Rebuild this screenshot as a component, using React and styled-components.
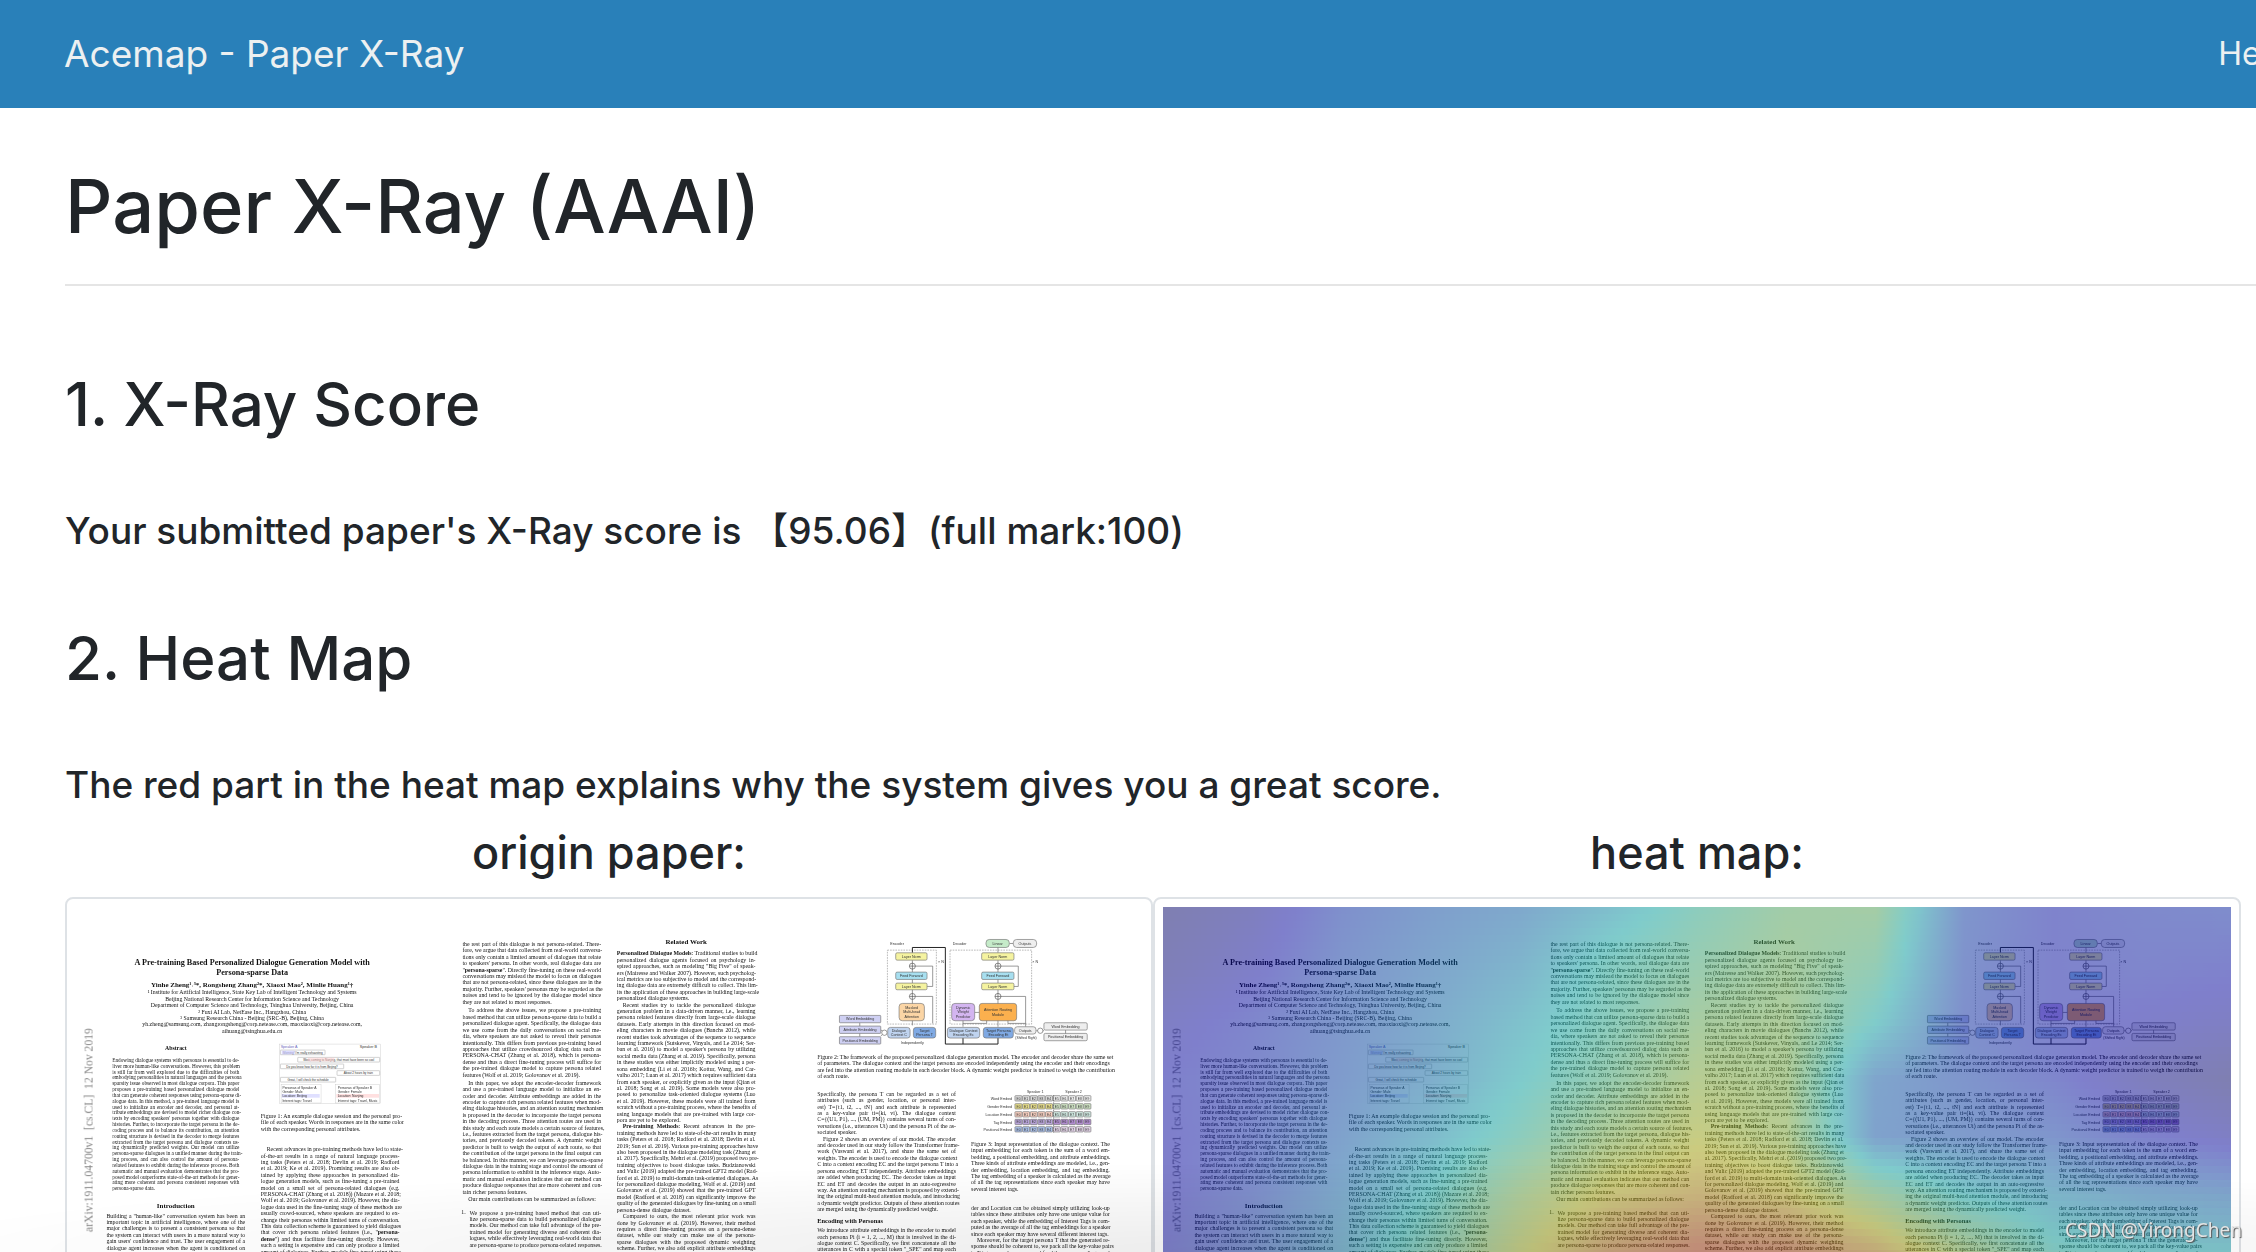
import styled, { createGlobalStyle } from 'styled-components'

// styles
const GlobalStyle = createGlobalStyle`
  *{
    box-sizing: border-box;
  }

  body{
    margin: 0;
    background-color: white;
    color: #212529;
    font-family: Inter, 'Noto Sans CJK SC', sans-serif;
    overflow: hidden;
  }
`

const Page = styled.div`
  width: calc(100% + 96px);
  height: 100vh;
  overflow: hidden;
`

const Navbar = styled.nav`
  display: flex;
  align-items: center;
  justify-content: space-between;
  height: 108px;
  padding: 0 64px;
  background-color: #2980b9;
`

const Brand = styled.a`
  color: #ecf0f1;
  font-size: 37px;
  line-height: 60px;
  text-decoration: none;
`

const NavLink = styled.a`
  color: #ecf0f1;
  font-size: 32px;
  line-height: 48px;
  text-decoration: none;
`

const Container = styled.main`
  padding: 50px 0 0 65px;
`

const Title = styled.h1`
  margin: 0;
  font-size: 74px;
  font-weight: 500;
  line-height: 96px;
`

const Divider = styled.hr`
  margin: 30px 0 80px;
  border: none;
  border-top: 2px solid #e5e5e5;
`

const Heading = styled.h2`
  margin: 0;
  font-size: 60px;
  font-weight: 500;
  line-height: 76px;
`

const Text = styled.p`
  margin: ${props => props.$last ? '65px 0 16px' : '65px 0'};
  font-size: 37px;
  font-weight: 500;
  line-height: 48px;
`

const Compare = styled.div`
  display: grid;
  grid-template-columns: 1fr 1fr;
  margin-right: 111px;
`

const Figure = styled.figure`
  display: flex;
  flex-direction: column;
  margin: 0;
`

const Caption = styled.figcaption`
  margin-bottom: 16px;
  font-size: 45px;
  font-weight: 500;
  line-height: 56px;
  text-align: center;
`

const Thumbnail = styled.div`
  padding: 8px;
  border: 2px solid #dee2e6;
  border-radius: 8px;

  svg{
    display: block;
    width: 100%;
  }
`

const Scan = styled.g`
  filter: blur(1px);
`

const Lines = styled.div`
  color: #111;
  font-family: 'Liberation Serif', serif;
  font-size: ${props => props.$size}px;
  line-height: ${props => props.$leading}px;
  white-space: nowrap;
`

const Line = styled.div`
  padding-left: ${props => props.$indent ? 10 : 0}px;
  text-align-last: ${props => props.$end ? 'left' : 'justify'};
`

const Shade = styled.div`
  position: fixed;
  right: 0;
  bottom: 0;
  left: 0;
  height: 90px;
  background: radial-gradient(ellipse 66% 100% at 60% 100%, rgba(0, 0, 0, 0.08), transparent);
  pointer-events: none;
`

const Watermark = styled.span`
  position: fixed;
  right: 14px;
  bottom: 8px;
  color: #e4e4e4;
  font-family: 'Noto Sans', sans-serif;
  font-size: 19px;
  line-height: 28px;
  text-shadow: 1px 1px 1px #555;
`

// paper text: ">" indents a line, "|" ends a paragraph, "*" wraps bold words
const abstractText = `Endowing dialogue systems with personas is essential to de-
liver more human-like conversations. However, this problem
is still far from well explored due to the difficulties of both
embodying personalities in natural languages and the persona
sparsity issue observed in most dialogue corpora. This paper
proposes a pre-training based personalized dialogue model
that can generate coherent responses using persona-sparse di-
alogue data. In this method, a pre-trained language model is
used to initialize an encoder and decoder, and personal at-
tribute embeddings are devised to model richer dialogue con-
texts by encoding speakers' personas together with dialogue
histories. Further, to incorporate the target persona in the de-
coding process and to balance its contribution, an attention
routing structure is devised in the decoder to merge features
extracted from the target persona and dialogue contexts us-
ing dynamically predicted weights. Our model can utilize
persona-sparse dialogues in a unified manner during the train-
ing process, and can also control the amount of persona-
related features to exhibit during the inference process. Both
automatic and manual evaluation demonstrates that the pro-
posed model outperforms state-of-the-art methods for gener-
ating more coherent and persona consistent responses with
persona-sparse data.|`

const introText = `Building a "human-like" conversation system has been an
important topic in artificial intelligence, where one of the
major challenges is to present a consistent persona so that
the system can interact with users in a more natural way to
gain users' confidence and trust. The user engagement of a
dialogue agent increases when the agent is conditioned on
various persona settings, including age, gender, language,
speaking accent, location, or even a proper sense of humor.`

const captionOne = `Figure 1: An example dialogue session and the personal pro-
file of each speaker. Words in responses are in the same color
with the corresponding personal attributes.|`

const recentText = `>Recent advances in pre-training methods have led to state-
of-the-art results in a range of natural language process-
ing tasks (Peters et al. 2018; Devlin et al. 2019; Radford
et al. 2019; Ke et al. 2019). Promising results are also ob-
tained by applying these approaches in personalized dia-
logue generation models, such as fine-tuning a pre-trained
model on a small set of persona-related dialogues (e.g.
PERSONA-CHAT (Zhang et al. 2018)) (Mazare et al. 2018;
Wolf et al. 2019; Golovanov et al. 2019). However, the dia-
logue data used in the fine-tuning stage of these methods are
usually crowd-sourced, where speakers are required to ex-
change their personas within limited turns of conversation.
This data collection scheme is guaranteed to yield dialogues
that cover rich persona related features (i.e., "*persona-*
*dense*") and thus facilitate fine-tuning directly. However,
such a setting is expensive and can only produce a limited
amount of dialogues. Further, models fine-tuned using these
data tend to over-fit to the routine that persona-related features`

const restText = `the rest part of this dialogue is not persona-related. There-
fore, we argue that data collected from real-world conversa-
tions only contain a limited amount of dialogues that relate
to speakers' persona. In other words, real dialogue data are
"*persona-sparse*". Directly fine-tuning on these real-world
conversations may mislead the model to focus on dialogues
that are not persona-related, since these dialogues are in the
majority. Further, speakers' personas may be regarded as the
noises and tend to be ignored by the dialogue model since
they are not related to most responses.|`

const addressText = `>To address the above issues, we propose a pre-training
based method that can utilize persona-sparse data to build a
personalized dialogue agent. Specifically, the dialogue data
we use come from the daily conversations on social me-
dia, where speakers are not asked to reveal their personas
intentionally. This differs from previous pre-training based
approaches that utilize crowdsourced dialog data such as
PERSONA-CHAT (Zhang et al. 2018), which is persona-
dense and thus a direct fine-tuning process will suffice for
the pre-trained dialogue model to capture persona related
features (Wolf et al. 2019; Golovanov et al. 2019).|`

const adoptText = `>In this paper, we adopt the encoder-decoder framework
and use a pre-trained language model to initialize an en-
coder and decoder. Attribute embeddings are added in the
encoder to capture rich persona related features when mod-
eling dialogue histories, and an attention routing mechanism
is proposed in the decoder to incorporate the target persona
in the decoding process. Three attention routes are used in
this study and each route models a certain source of features,
i.e., features extracted from the target persona, dialogue his-
tories, and previously decoded tokens. A dynamic weight
predictor is built to weigh the output of each route, so that
the contribution of the target persona in the final output can
be balanced. In this manner, we can leverage persona-sparse
dialogue data in the training stage and control the amount of
persona information to exhibit in the inference stage. Auto-
matic and manual evaluation indicates that our method can
produce dialogue responses that are more coherent and con-
tain richer persona features.|`

const itemText = `We propose a pre-training based method that can uti-
lize persona-sparse data to build personalized dialogue
models. Our method can take full advantage of the pre-
trained model for generating diverse and coherent dia-
logues, while effectively leveraging real-world data that
are persona-sparse to produce persona-related responses.|`

const relatedText = `*Personalized Dialogue Models*: Traditional studies to build
personalized dialogue agents focused on psychology in-
spired approaches, such as modeling "Big Five" of speak-
ers (Mairesse and Walker 2007). However, such psycholog-
ical metrics are too subjective to model and the correspond-
ing dialogue data are extremely difficult to collect. This lim-
its the application of these approaches in building large-scale
personalized dialogue systems.|
>Recent studies try to tackle the personalized dialogue
generation problem in a data-driven manner, i.e., learning
persona related features directly from large-scale dialogue
datasets. Early attempts in this direction focused on mod-
eling characters in movie dialogues (Banchs 2012), while
recent studies took advantages of the sequence to sequence
learning framework (Sutskever, Vinyals, and Le 2014; Ser-
ban et al. 2016) to model a speaker's persona by utilizing
social media data (Zhang et al. 2019). Specifically, persona
in these studies was either implicitly modeled using a per-
sona embedding (Li et al. 2016b; Kottur, Wang, and Car-
valho 2017; Luan et al. 2017) which requires sufficient data
from each speaker, or explicitly given as the input (Qian et
al. 2018; Song et al. 2019). Some models were also pro-
posed to personalize task-oriented dialogue systems (Luo
et al. 2019). However, these models were all trained from
scratch without a pre-training process, where the benefits of
using language models that are pre-trained with large cor-
pora are yet to be explored.|
>*Pre-training Methods*: Recent advances in the pre-
training methods have led to state-of-the-art results in many
tasks (Peters et al. 2018; Radford et al. 2018; Devlin et al.
2019; Sun et al. 2019). Various pre-training approaches have
also been proposed in the dialogue modeling task (Zhang et
al. 2017). Specifically, Mehri et al. (2019) proposed two pre-
training objectives to boost dialogue tasks. Budzianowski
and Vulic (2019) adapted the pre-trained GPT2 model (Rad-
ford et al. 2019) to multi-domain task-oriented dialogues. As
for personalized dialogue modeling, Wolf et al. (2019) and
Golovanov et al. (2019) showed that the pre-trained GPT
model (Radford et al. 2018) can significantly improve the
quality of the generated dialogues by fine-tuning on a small
persona-dense dialogue dataset.|
>Compared to ours, the most relevant prior work was
done by Golovanov et al. (2019). However, their method
requires a direct fine-tuning process on a persona-dense
dataset, while our study can make use of the persona-
sparse dialogues with the proposed dynamic weighting
scheme. Further, we also add explicit attribute embeddings
to model structured personas when encoding dialogue con-
texts, which can bring more coherent responses in general.`

const captionTwo = `Figure 2: The framework of the proposed personalized dialogue generation model. The encoder and decoder share the same set
of parameters. The dialogue context and the target persona are encoded independently using the encoder and their encodings
are fed into the attention routing module in each decoder block. A dynamic weight predictor is trained to weigh the contribution
of each route.|`

const personaText = `Specifically, the persona T can be regarded as a set of
attributes (such as gender, location, or personal inter-
est) T={t1, t2, ..., tN} and each attribute is represented
as a key-value pair ti=(ki, vi). The dialogue context
C={(U1, P1), ..., (UM, PM)} contains several turns of con-
versations (i.e., utterances Ui) and the persona Pi of the as-
sociated speaker.|
>Figure 2 shows an overview of our model. The encoder
and decoder used in our study follow the Transformer frame-
work (Vaswani et al. 2017), and share the same set of
weights. The encoder is used to encode the dialogue context
C into a context encoding EC and the target persona T into a
persona encoding ET independently. Attribute embeddings
are added when producing EC. The decoder takes as input
EC and ET and decodes the output in an auto-regressive
way. An attention routing mechanism is proposed by extend-
ing the original multi-head attention module, and introducing
a dynamic weight predictor. Outputs of these attention routes
are merged using the dynamically predicted weight.|`

const encodingText = `We introduce attribute embeddings in the encoder to model
each persona Pi (i = 1, 2, ..., M) that is involved in the di-
alogue context C. Specifically, we first concatenate all the
utterances in C with a special token "_SPE" and map each
attribute of the speakers to an embedding representation.`

const captionThree = `Figure 3: Input representation of the dialogue context. The
input embedding for each token is the sum of a word em-
bedding, a positional embedding, and attribute embeddings.
Three kinds of attribute embeddings are modeled, i.e., gen-
der embedding, location embedding, and tag embedding.
The tag embedding of a speaker is calculated as the average
of all the tag representations since each speaker may have
several interest tags.|`

const lookupText = `der and Location can be obtained simply utilizing look-up
tables since these attributes only have one unique value for
each speaker, while the embedding of Interest Tags is com-
puted as the average of all the tag embeddings for a speaker
since each speaker may have several different interest tags.|
>Moreover, for the target persona T that the generated re-
sponse should be coherent to, we pack all the key-value pairs
in T into a word sequence and feed the corresponding word
embeddings to the encoder.`

const renderBold = (line) => line.split('*').map((part, i) => i % 2 ? <b key={i}>{part}</b> : part)

const Block = ({ x, y, width, size = 10, leading = 11, text }) => {
  const lines = text.split('\n')

  return(
    <foreignObject x={x} y={y} width={width + 10} height={lines.length * leading + 4}>
      <Lines $size={size} $leading={leading} style={{ width }}>
        {lines.map((line, i) =>
          <Line key={i} $indent={line.startsWith('>')} $end={line.endsWith('|')}>
            {renderBold(line.replace('>', '').replace('|', ''))}
          </Line>
        )}
      </Lines>
    </foreignObject>
  )
}

const Label = ({ x, y, size = 10, bold, anchor = 'middle', fill = '#111', children }) => (
  <text x={x} y={y} fontFamily="'Liberation Serif', serif" fontSize={size} fontWeight={bold ? 700 : 400} textAnchor={anchor} fill={fill}>{children}</text>
)

const FigureText = ({ x, y, size = 11, anchor = 'middle', fill = '#333', children }) => (
  <text x={x} y={y} fontFamily="'Liberation Sans', sans-serif" fontSize={size} textAnchor={anchor} fill={fill}>{children}</text>
)

const Box = ({ x, y, w, h, fill = 'white', stroke = '#777', r = 4, lines = [], size = 11 }) => (
  <g>
    <rect x={x} y={y} width={w} height={h} rx={r} fill={fill} stroke={stroke} strokeWidth='2' />
    {lines.map((line, i) =>
      <FigureText key={line} size={size} x={x + w / 2} y={y + h / 2 + 4 + (i - (lines.length - 1) / 2) * 13}>{line}</FigureText>
    )}
  </g>
)

const DialogueFigure = () => (
  <g transform='translate(-43 -46) scale(0.5716)'>
    <rect x='690' y='492' width='303' height='178' fill='white' stroke='#bbb' />
    <FigureText x={718} y={505} fill='#66b'>Speaker A</FigureText>
    <FigureText x={956} y={505}>Speaker B</FigureText>
    <Box x={692} y={510} w={134} h={14} r={1} stroke='#bbb' lines={['Morning! I’m really exhausting']} size={9} />
    <Box x={744} y={532} w={246} h={14} r={1} stroke='#bbb' lines={['Wow, coming to Nanjing, that must have been so cool']} size={9} />
    <Box x={692} y={552} w={190} h={14} r={1} stroke='#bbb' lines={['Do you know how far it is from Beijing?']} size={9} />
    <Box x={862} y={572} w={128} h={14} r={1} stroke='#bbb' lines={['About 2 hours by train']} size={9} />
    <Box x={692} y={592} w={166} h={14} r={1} stroke='#bbb' lines={['Great, I will check the schedule']} size={9} />
    <rect x='694' y='614' width='120' height='55' fill='none' stroke='#bbb' />
    <rect x='858' y='614' width='132' height='55' fill='none' stroke='#bbb' />
    <rect x='696' y='642' width='114' height='11' fill='#ccf' opacity='0.6' />
    <rect x='860' y='642' width='128' height='11' fill='#fcc' opacity='0.6' />
    <rect x='696' y='512' width='38' height='11' fill='#ccf' opacity='0.7' />
    <rect x='774' y='533' width='80' height='11' fill='#fcc' opacity='0.5' />
    {['Personas of Speaker A', 'Gender:      Male', 'Location:    Beijing', 'Interest tags: Travel'].map((line, i) =>
      <FigureText key={line} size={10} anchor='start' x={698} y={626 + i * 13}>{line}</FigureText>
    )}
    {['Personas of Speaker B', 'Gender:      Female', 'Location:    Nanjing', 'Interest tags: Travel, Music'].map((line, i) =>
      <FigureText key={line} size={10} anchor='start' x={864} y={626 + i * 13}>{line}</FigureText>
    )}
  </g>
)

const ModelFigure = () => (
  <g transform='translate(4 -46) scale(0.5716)'>
    <FigureText x={327} y={194}>Encoder</FigureText>
    <FigureText x={515} y={194}>Decoder</FigureText>
    <g fill='none' stroke='#666' strokeWidth='2'>
      <rect x='298' y='210' width='147' height='222' strokeDasharray='5 3' stroke='#999' />
      <rect x='486' y='210' width='245' height='222' strokeDasharray='5 3' stroke='#999' />
      <path d='M373 218V202H472V492H630V474M525 492V474' stroke='#222' strokeWidth='3' />
      <path d='M373 240V436M373 258H434V319H417M373 349H434V430' />
      <path d='M630 200V218M630 240V440M630 258H691V319H678M630 349H713V440M560 397H574M525 420V440M596 420V430H525M660 420V430H713' />
      <path d='M215 428V470M278 449L289 458L278 468M833 450V462M745 452H768M665 190H676' />
      <circle cx='289' cy='458' r='8' fill='white' />
      <circle cx='757' cy='452' r='8' fill='white' />
    </g>
    {[[373, 258], [373, 349], [630, 258], [630, 349]].map(([x, y]) =>
      <g key={x + y} stroke='#555' strokeWidth='2'>
        <circle cx={x} cy={y} r='9' fill='white' />
        <path d={`M${x - 9} ${y}h18M${x} ${y - 9}v18`} />
      </g>
    )}
    <Box x={594} y={178} w={70} h={24} r={10} fill='#c5ebc9' lines={['Linear']} />
    <Box x={676} y={178} w={70} h={24} r={10} fill='#eee' lines={['Outputs']} />
    <Box x={323} y={218} w={94} h={22} fill='#f5f3a0' lines={['Layer Norm']} />
    <Box x={323} y={276} w={94} h={22} fill='#a7dff0' lines={['Feed Forward']} />
    <Box x={323} y={309} w={94} h={20} fill='#f5f3a0' lines={['Layer Norm']} />
    <Box x={333} y={370} w={76} h={52} r={10} fill='#fbd5a5' lines={['Masked', 'Multi-head', 'Attention']} />
    <Box x={581} y={218} w={97} h={22} fill='#f5f3a0' lines={['Layer Norm']} />
    <Box x={581} y={276} w={97} h={22} fill='#a7dff0' lines={['Feed Forward']} />
    <Box x={581} y={309} w={97} h={20} fill='#f5f3a0' lines={['Layer Norm']} />
    <Box x={491} y={370} w={69} h={52} r={10} fill='#d3b5f0' lines={['Dynamic', 'Weight', 'Predictor']} />
    <Box x={574} y={370} w={112} h={52} r={8} fill='#fbb04e' lines={['Attention Routing', 'Module']} />
    <Box x={154} y={406} w={124} h={22} r={2} fill='#cfd0f3' lines={['Word Embedding']} />
    <Box x={154} y={438} w={124} h={22} r={2} fill='#cfd0f3' lines={['Attribute Embedding']} />
    <Box x={154} y={470} w={124} h={22} r={2} fill='#cfd0f3' lines={['Positional Embedding']} />
    <Box x={299} y={442} w={67} h={32} r={8} fill='#bfd3ef' lines={['Dialogue', 'Context C']} />
    <Box x={376} y={442} w={67} h={32} r={8} fill='#7fa9e3' lines={['Target', 'Persona T']} />
    <FigureText x={373} y={492}>Independently</FigureText>
    <Box x={478} y={442} w={97} h={32} r={8} fill='#bfd3ef' lines={['Dialogue Context', 'Encoding Ec']} />
    <Box x={586} y={442} w={90} h={32} r={8} fill='#7fa9e3' lines={['Target Persona', 'Encoding Et']} />
    <Box x={680} y={440} w={64} h={22} r={8} fill='#eee' lines={['Outputs']} />
    <FigureText x={714} y={478} size={10}>(Shifted Right)</FigureText>
    <Box x={768} y={428} w={130} h={22} fill='#eee' lines={['Word Embedding']} />
    <Box x={768} y={460} w={130} h={22} fill='#eee' lines={['Positional Embedding']} />
    <FigureText x={459} y={250}>× N</FigureText>
    <FigureText x={742} y={250}>× N</FigureText>
  </g>
)

const inputRows = [
  { label: 'Word Embed', y: 647, left: '#dcdcdc', right: '#eeeeee' },
  { label: 'Gender Embed', y: 671, left: '#e6dd8a', right: '#cfe3c4' },
  { label: 'Location Embed', y: 695, left: '#f7cfc0', right: '#cfe8e0' },
  { label: 'Tag Embed', y: 718, left: '#b7a3d8', right: '#b18cd0' },
  { label: 'Positional Embed', y: 740, left: '#a9bfe8', right: '#e3d4e8' },
]

const InputFigure = () => (
  <g transform='translate(4 -46) scale(0.5716)'>
    <FigureText x={742} y={639}>Speaker 1</FigureText>
    <FigureText x={857} y={639}>Speaker 2</FigureText>
    {inputRows.map(row =>
      <g key={row.label}>
        <FigureText x={672} y={row.y + 13} anchor='end'>{row.label}</FigureText>
        {[0, 1, 2, 3, 4, 5, 6, 7, 8, 9].map(i =>
          <Box key={i} x={681 + i * 23} y={row.y} w={21} h={16} r={2} fill={i < 5 ? row.left : row.right} lines={['E' + i]} size={10} />
        )}
      </g>
    )}
    <path d='M797 645V760' stroke='#555' strokeWidth='2' strokeDasharray='3 2' />
  </g>
)

const FirstPage = () => (
  <g>
    <text transform='translate(31 558) rotate(-90)' fontFamily="'Liberation Serif', serif" fontSize='20' fill='#888' xmlSpace='preserve'>arXiv:1911.04700v1  [cs.CL]  12 Nov 2019</text>
    <Label x={304} y={99} size={14} bold>A Pre-training Based Personalized Dialogue Generation Model with</Label>
    <Label x={304} y={116} size={14} bold>Persona-sparse Data</Label>
    <Label x={304} y={137} size={12} bold>Yinhe Zheng¹˒³*, Rongsheng Zhang²*, Xiaoxi Mao², Minlie Huang¹†</Label>
    <Label x={304} y={150}>¹ Institute for Artificial Intelligence, State Key Lab of Intelligent Technology and Systems</Label>
    <Label x={304} y={161}>Beijing National Research Center for Information Science and Technology</Label>
    <Label x={304} y={172}>Department of Computer Science and Technology, Tsinghua University, Beijing, China</Label>
    <Label x={304} y={183}>² Fuxi AI Lab, NetEase Inc., Hangzhou, China</Label>
    <Label x={304} y={194}>³ Samsung Research China - Beijing (SRC-B), Beijing, China</Label>
    <Label x={304} y={205}>yh.zheng@samsung.com, zhangrongsheng@corp.netease.com, maoxiaoxi@corp.netease.com,</Label>
    <Label x={304} y={216}>aihuang@tsinghua.edu.cn</Label>
    <Label x={173} y={246} bold>Abstract</Label>
    <Block x={64} y={258} width={218} size={9} leading={10} text={abstractText} />
    <Label x={173} y={516} size={12} bold>Introduction</Label>
    <Block x={54} y={524} width={238} text={introText} />
    <DialogueFigure />
    <Block x={319} y={353} width={238} text={captionOne} />
    <Block x={319} y={410} width={238} text={recentText} />
  </g>
)

const SecondPage = () => (
  <g transform='translate(611 0)'>
    <Block x={54} y={58} width={238} text={restText} />
    <Block x={54} y={172} width={238} text={addressText} />
    <Block x={54} y={296} width={238} text={adoptText} />
    <Block x={54} y={496} width={238} text='>Our main contributions can be summarized as follows:|' />
    <Label x={52} y={527} anchor='start'>1.</Label>
    <Block x={66} y={519} width={226} text={itemText} />
    <Label x={438} y={64} size={12} bold>Related Work</Label>
    <Block x={319} y={74} width={238} text={relatedText} />
  </g>
)

const ThirdPage = () => (
  <g transform='translate(1220 0)'>
    <ModelFigure />
    <Block x={54} y={252} width={502} text={captionTwo} />
    <Block x={54} y={315} width={238} text={personaText} />
    <Label x={54} y={542} size={11} bold anchor='start'>Encoding with Personas</Label>
    <Block x={54} y={549} width={238} text={encodingText} />
    <InputFigure />
    <Block x={318} y={401} width={238} text={captionThree} />
    <Block x={318} y={511} width={238} text={lookupText} />
  </g>
)

// attention values, one row for every 98 units of the paper's height
const attention = [
  [0.04, 0.08, 0.18, 0.23, 0.26, 0.33, 0.42, 0.49, 0.5, 0.2, 0.14, 0.16, 0.17],
  [0.06, 0.11, 0.2, 0.25, 0.3, 0.4, 0.46, 0.51, 0.45, 0.19, 0.14, 0.15, 0.14],
  [0.1, 0.15, 0.21, 0.27, 0.34, 0.42, 0.51, 0.53, 0.38, 0.18, 0.14, 0.12, 0.1],
  [0.13, 0.16, 0.22, 0.28, 0.37, 0.46, 0.56, 0.54, 0.25, 0.2, 0.15, 0.08, 0.04],
  [0.12, 0.17, 0.24, 0.32, 0.42, 0.54, 0.61, 0.56, 0.24, 0.22, 0.2, 0.14, 0.1],
  [0.12, 0.18, 0.27, 0.38, 0.53, 0.64, 0.69, 0.65, 0.5, 0.37, 0.31, 0.27, 0.25],
  [0.13, 0.2, 0.3, 0.44, 0.6, 0.74, 0.81, 0.79, 0.71, 0.54, 0.4, 0.37, 0.36],
  [0.14, 0.22, 0.34, 0.5, 0.66, 0.82, 0.88, 0.86, 0.76, 0.6, 0.48, 0.42, 0.4],
  [0.14, 0.22, 0.34, 0.5, 0.66, 0.82, 0.88, 0.86, 0.76, 0.6, 0.48, 0.42, 0.4],
]

const valueAt = (row, col) => {
  const r = Math.min(Math.floor(row), attention.length - 2)
  const c = Math.min(Math.floor(col), attention[0].length - 2)
  const top = attention[r][c] + (attention[r][c + 1] - attention[r][c]) * (col - c)
  const bottom = attention[r + 1][c] + (attention[r + 1][c + 1] - attention[r + 1][c]) * (col - c)
  return top + (bottom - top) * (row - r)
}

const heatColor = (value) => {
  const channel = (center) => Math.round(153 * Math.max(0, Math.min(1, 1.5 - Math.abs(4 * value - center))))
  return `rgb(${channel(3)}, ${channel(2)}, ${channel(1)})`
}

const strips = Array.from({ length: 66 }, (_, i) => i)
const stops = Array.from({ length: 73 }, (_, i) => i)

const HeatLayer = () => (
  <g opacity='0.5'>
    {strips.map(i =>
      <g key={i}>
        <linearGradient id={`heat${i}`}>
          {stops.map(s => <stop key={s} offset={s / 72} stopColor={heatColor(valueAt((i * 12 + 6) / 98.5, s / 6))} />)}
        </linearGradient>
        <rect x='0' y={i * 12} width='1833' height='12' fill={`url(#heat${i})`} shapeRendering='crispEdges' />
      </g>
    )}
  </g>
)

const Paper = ({ label, heat }) => (
  <svg viewBox='0 0 1833 792' role='img' aria-label={label}>
    <rect width='1833' height='792' fill='white' />
    <Scan>
      <FirstPage />
      <SecondPage />
      <ThirdPage />
    </Scan>
    {heat && <HeatLayer />}
  </svg>
)

const App = () => {
  const score = '95.06'

  return(
    <>
      <GlobalStyle />
      <Page>
        <Navbar>
          <Brand href='#'>Acemap - Paper X-Ray</Brand>
          <NavLink href='#help'>Help</NavLink>
        </Navbar>
        <Container>
          <Title>Paper X-Ray (AAAI)</Title>
          <Divider />
          <Heading>1. X-Ray Score</Heading>
          <Text>Your submitted paper's X-Ray score is 【{score}】(full mark:100)</Text>
          <Heading>2. Heat Map</Heading>
          <Text $last>The red part in the heat map explains why the system gives you a great score.</Text>
          <Compare>
            <Figure>
              <Caption>origin paper:</Caption>
              <Thumbnail><Paper label='origin paper' /></Thumbnail>
            </Figure>
            <Figure>
              <Caption>heat map:</Caption>
              <Thumbnail><Paper label='heat map' heat /></Thumbnail>
            </Figure>
          </Compare>
        </Container>
      </Page>
      <Shade />
      <Watermark>CSDN @YirongChen</Watermark>
    </>
  )
}

export default App
